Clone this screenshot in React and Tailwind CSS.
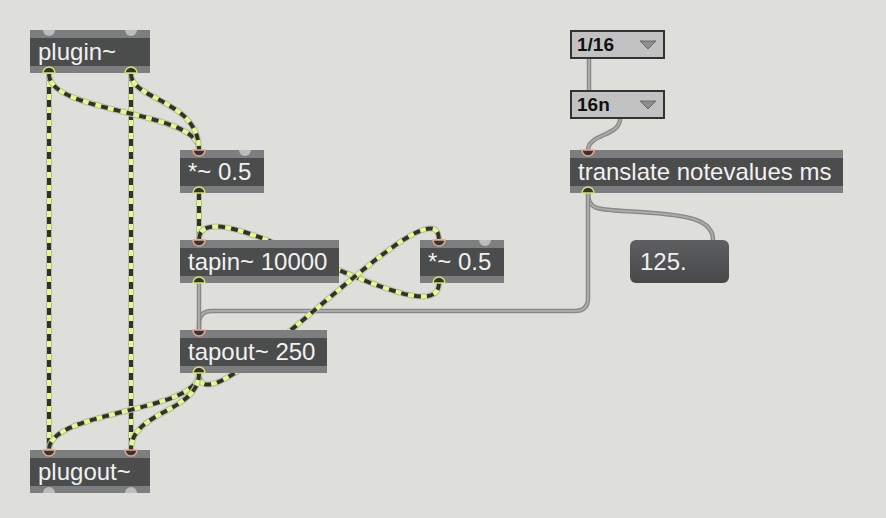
import React from 'react'

const font = "font-['Liberation_Sans',Arial,sans-serif]"

function ObjBox({ className, text }) {
  return (
    <div className={`absolute flex flex-col ${className}`}>
      <div className="h-[8px] bg-[#7d7e80]" />
      <div className={`h-[28px] bg-[#4b4c4c] pl-[8px] text-[24px] leading-[28px] text-[#f1f1f1] whitespace-nowrap ${font}`}>
        {text}
      </div>
      <div className="h-[7px] bg-[#7d7e80]" />
    </div>
  )
}

function UMenu({ className, text }) {
  return (
    <div className={`absolute flex items-center justify-between border-2 border-[#333] bg-[#c2c2c2] pl-[5px] pr-[6px] ${className}`}>
      <span className={`text-[19px] font-bold leading-none text-[#111] ${font}`}>{text}</span>
      <svg width="18" height="10" viewBox="0 0 18 10">
        <path d="M1,1 L17,1 L9,9 Z" fill="#8e8e8e" stroke="#6a6a6a" strokeWidth="1" />
      </svg>
    </div>
  )
}

function Sig({ d }) {
  return (
    <g fill="none">
      <path d={d} stroke="#b7b8b0" strokeWidth="6" />
      <path d={d} stroke="#e2fa8a" strokeWidth="4" />
      <path d={d} stroke="#2f3328" strokeWidth="4" strokeDasharray="7 6" />
    </g>
  )
}

function Ctl({ d }) {
  return (
    <g fill="none">
      <path d={d} stroke="#888888" strokeWidth="4.5" />
      <path d={d} stroke="#ababab" strokeWidth="2" />
    </g>
  )
}

// inlet: lower half circle hanging from top edge; outlet: upper half circle on bottom edge
function Inlet({ x, y, on }) {
  const d = `M${x - 6},${y} A6,6 0 0 0 ${x + 6},${y} Z`
  return on
    ? <path d={d} fill="#333434" stroke="#e9a392" strokeWidth="1.5" />
    : <path d={d} fill="#bcbcbc" />
}

function Outlet({ x, y, on }) {
  const d = `M${x - 6},${y} A6,6 0 0 1 ${x + 6},${y} Z`
  return on
    ? <path d={d} fill="#333434" stroke="#d7e06a" strokeWidth="1.5" />
    : <path d={d} fill="#bcbcbc" />
}

export default function App() {
  return (
    <div className="relative w-[886px] h-[518px] overflow-hidden bg-[#dededa]">
      {/* patch cords */}
      <svg className="absolute inset-0" width="886" height="518">
        <Ctl d="M589,59 L589,90" />
        <Ctl d="M620,119 C620,136 588,134 588,150" />
        <Ctl d="M588,193 C588,212 600,209 640,212 C690,215 713,220 713,240" />
        <Ctl d="M588,193 L588,298 Q588,311 575,311 L212,311 Q199,311 199,324 L199,330" />
        <Ctl d="M199,283 L199,330" />

        <Sig d="M49,74 L49,450" />
        <Sig d="M131,74 L131,450" />
        <Sig d="M49,74 C49,114 199,110 199,150" />
        <Sig d="M131,74 C131,100 199,100 199,150" />
        <Sig d="M199,193 L199,240" />
        <Sig d="M439,283 C439,343 199,180 199,240" />
        <Sig d="M199,373 C199,443 439,170 439,240" />
        <Sig d="M199,373 C199,413 49,410 49,450" />
        <Sig d="M199,373 C199,413 131,410 131,450" />
      </svg>

      {/* objects */}
      <ObjBox className="left-[30px] top-[30px] w-[120px]" text="plugin~" />
      <ObjBox className="left-[180px] top-[150px] w-[84px]" text="*~ 0.5" />
      <ObjBox className="left-[180px] top-[240px] w-[159px]" text="tapin~ 10000" />
      <ObjBox className="left-[420px] top-[240px] w-[84px]" text="*~ 0.5" />
      <ObjBox className="left-[180px] top-[330px] w-[147px]" text="tapout~ 250" />
      <ObjBox className="left-[30px] top-[450px] w-[120px]" text="plugout~" />
      <ObjBox className="left-[570px] top-[150px] w-[273px]" text="translate notevalues ms" />

      <UMenu className="left-[570px] top-[30px] w-[95px] h-[29px]" text="1/16" />
      <UMenu className="left-[570px] top-[90px] w-[95px] h-[29px]" text="16n" />

      <div className={`absolute left-[630px] top-[240px] w-[99px] h-[43px] rounded-[6px] bg-gradient-to-b from-[#5e5f61] to-[#474848] pl-[10px] text-[24px] leading-[43px] text-[#efefef] ${font}`}>
        125.
      </div>

      {/* inlets / outlets */}
      <svg className="absolute inset-0 pointer-events-none" width="886" height="518">
        <Inlet x={49} y={30} />
        <Inlet x={131} y={30} />
        <Outlet x={49} y={73} on />
        <Outlet x={131} y={73} on />

        <Inlet x={199} y={150} on />
        <Inlet x={245} y={150} />
        <Outlet x={199} y={193} on />

        <Inlet x={199} y={240} on />
        <Outlet x={199} y={283} on />

        <Inlet x={439} y={240} on />
        <Inlet x={485} y={240} />
        <Outlet x={439} y={283} on />

        <Inlet x={199} y={330} on />
        <Outlet x={199} y={373} on />

        <Inlet x={49} y={450} on />
        <Inlet x={131} y={450} on />
        <Outlet x={49} y={493} />
        <Outlet x={131} y={493} />

        <Inlet x={588} y={150} on />
        <Outlet x={588} y={193} on />
      </svg>
    </div>
  )
}
